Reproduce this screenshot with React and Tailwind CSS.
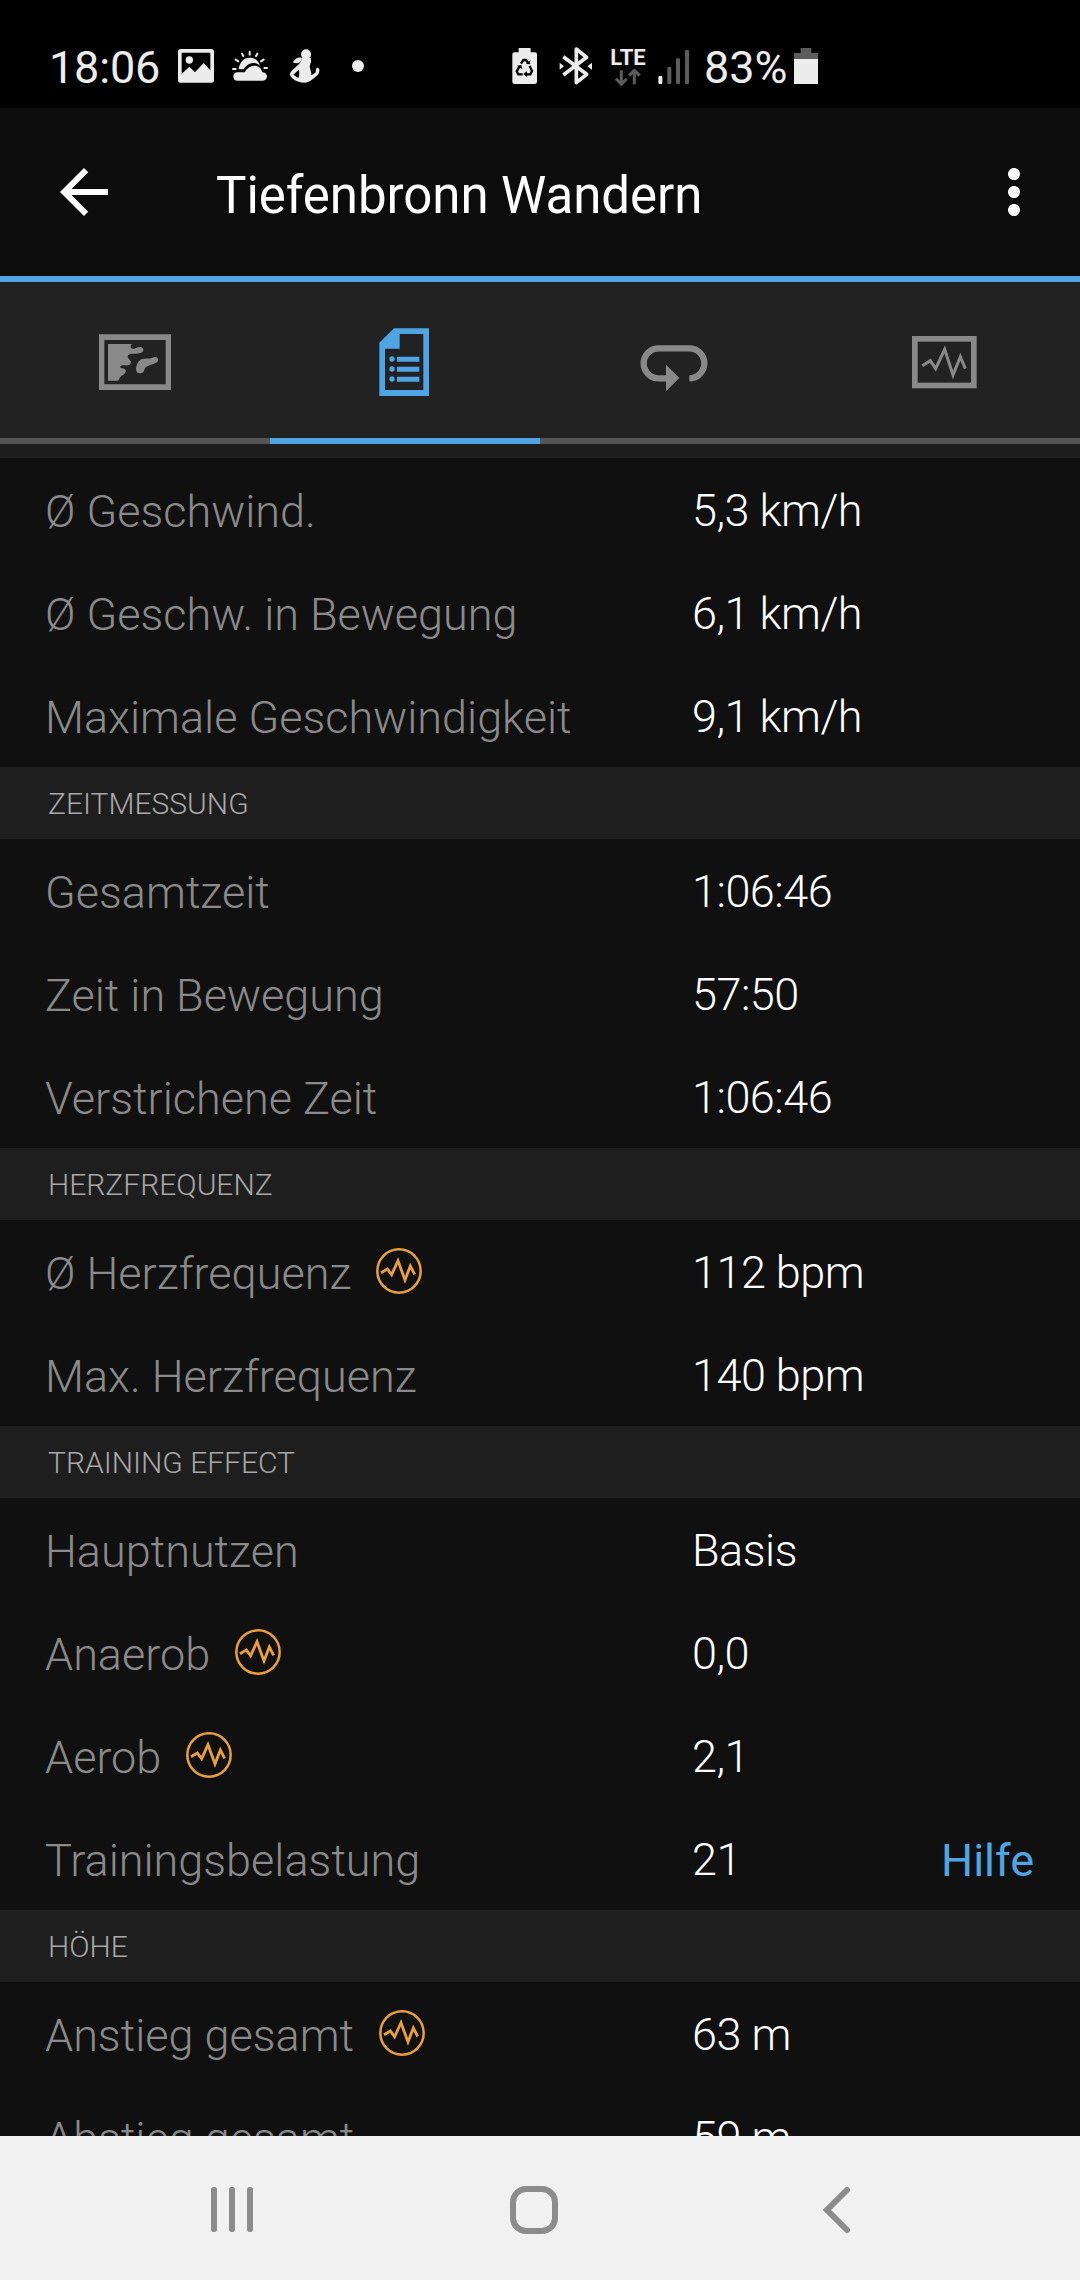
const PULSE_POINTS = '93,128 112,117 125,134 144,92 165,150 181,108 194,133';

const sections = [
  {
    title: null,
    rows: [
      { label: 'Ø Geschwind.', value: '5,3 km/h' },
      { label: 'Ø Geschw. in Bewegung', value: '6,1 km/h' },
      { label: 'Maximale Geschwindigkeit', value: '9,1 km/h' },
    ],
  },
  {
    title: 'ZEITMESSUNG',
    rows: [
      { label: 'Gesamtzeit', value: '1:06:46' },
      { label: 'Zeit in Bewegung', value: '57:50' },
      { label: 'Verstrichene Zeit', value: '1:06:46' },
    ],
  },
  {
    title: 'HERZFREQUENZ',
    rows: [
      { label: 'Ø Herzfrequenz', value: '112 bpm', pulse: true },
      { label: 'Max. Herzfrequenz', value: '140 bpm' },
    ],
  },
  {
    title: 'TRAINING EFFECT',
    rows: [
      { label: 'Hauptnutzen', value: 'Basis' },
      { label: 'Anaerob', value: '0,0', pulse: true },
      { label: 'Aerob', value: '2,1', pulse: true },
      { label: 'Trainingsbelastung', value: '21', link: 'Hilfe' },
    ],
  },
  {
    title: 'HÖHE',
    rows: [
      { label: 'Anstieg gesamt', value: '63 m', pulse: true },
      { label: 'Abstieg gesamt', value: '59 m' },
    ],
  },
];

/* Status bar icons */

const PictureIcon = () => (
  <svg className="w-9 h-10 shrink-0" viewBox="444 48 108 120" fill="#ececec">
    <path
      fillRule="evenodd"
      d="M452 57h92q8 0 8 8v85q0 8-8 8h-92q-8 0-8-8V65q0-8 8-8zM455 68v64l23-22 17 17 26-28 20 22V68z"
    />
    <circle cx="478" cy="90" r="11" />
  </svg>
);

const WeatherIcon = () => (
  <svg className="w-9 h-10 shrink-0" viewBox="606 48 108 120" fill="#ececec">
    <path d="M622 127h22c7-13 17-20 29-20 13 0 21 8 24 20 8 0 14 5 14 12s-5 13-12 13h-77c-7 0-12-5-12-12 0-8 5-13 12-13z" />
    <path d="M626 118c2-21 15-35 33-35 15 0 27 8 31 24-9-8-20-10-31-6-8 3-13 9-18 17z" />
    <path
      d="M659 65v9M636 71l4 7M682 71l-4 7M617 89l8 5M701 89l-8 5M609 117h8M703 114h8"
      stroke="#ececec"
      strokeWidth="6"
      strokeLinecap="round"
    />
  </svg>
);

const WorkoutIcon = () => (
  <svg className="w-[30px] h-10 shrink-0" viewBox="779 48 90 120" fill="#ececec">
    <circle cx="827" cy="73" r="15" />
    <path d="M787 97c7-11 16-17 27-14l-2 10c-6 7-13 9-25 4z" />
    <path d="M813 84h28c4 10-2 17-3 27 2 8 6 18 5 25l12-8c3-4 0-11 4-14 5-3 9 2 8 7 0 11-5 15-13 21-10 8-17 16-30 16-15 0-28-4-39-14-7-7-8-14-1-21l22-21c5-5 8-10 7-18zM805 119l-16 15 15 10c3-8 4-17 1-25z" fillRule="evenodd" />
  </svg>
);

const BatterySaverIcon = () => (
  <svg className="w-[25px] h-10 shrink-0" viewBox="67 48 75 120">
    <path d="M87 54h36v13h13q6 0 6 6v82q0 7-7 7H75q-7 0-7-7V73q0-6 6-6h13z" fill="#ececec" />
    <g fill="none" stroke="#000" strokeWidth="7">
      <path d="M94 101l7-11h8l7 10M120 108l7 15-5 10h-13M99 133H86l-5-9 8-14" />
    </g>
    <path d="M109 102l12 1 1-13zM112 124v17l-11-9zM82 107l13-2 3 12z" fill="#000" />
  </svg>
);

const BluetoothIcon = () => (
  <svg className="w-[33px] h-10 shrink-0" viewBox="206 48 99 120">
    <path
      d="M219 80l70 53-31 25V57l31 25-70 53"
      fill="none"
      stroke="#ececec"
      strokeWidth="11"
      strokeLinejoin="round"
    />
    <path d="M208 98l13 11-13 10zM305 98l-14 11 14 10z" fill="#ececec" />
  </svg>
);

const DataArrowsIcon = () => (
  <svg className="w-[26px] h-[17px]" viewBox="377 119 78 51" fill="none" stroke="#5c5c5c" strokeWidth="9">
    <path d="M396 123v39M380 148l16 17 16-17M435 165v-39M419 139l16-16 16 16" />
  </svg>
);

const SignalIcon = () => (
  <svg className="w-8 h-10 shrink-0" viewBox="505 48 96 120" fill="#5c5c5c">
    <rect x="506" y="138" width="12" height="24" rx="3" fill="#ececec" />
    <rect x="533" y="111" width="12" height="51" rx="3" />
    <rect x="559" y="85" width="12" height="77" rx="3" />
    <rect x="586" y="60" width="12" height="102" rx="3" />
  </svg>
);

const BatteryIcon = () => (
  <svg className="w-6 h-10 shrink-0" viewBox="912 48 72 120">
    <path d="M932 54h32v15h20v18h-72V69h20z" fill="#5c5c5c" />
    <path d="M912 87h72v75h-72z" fill="#ececec" />
  </svg>
);

/* Tab icons */

const MapIcon = () => (
  <svg className="size-[90px]" viewBox="90 45 270 270" fill="#898989">
    <path fillRule="evenodd" d="M117 103h216v167H117zM133 120v133h184V120z" />
    <path d="M144 132h72c-6 6-5 14 3 14 9 0 14-6 23-5 9 2 11 11 4 16-11 7-24 2-36 5-8 3-9 9-4 14 9 8 9 14 1 19-8 3-16-1-24 2-4 3-3 7 3 8 10 1 14 7 10 13-3 6-11 7-15 13-4 5-4 9-7 11h-30z" />
    <path d="M228 207c1-14 7-26 19-30 12-3 19 0 30-4 8-4 16-2 17 5 1 8-6 11-14 14-10 3-20 6-25 13-4 7-2 15-15 15-8 0-12-5-12-13z" />
  </svg>
);

const DetailsIcon = () => (
  <svg className="size-[90px]" viewBox="900 45 270 270" fill="#4fa5e4">
    <path fillRule="evenodd" d="M1002 85h105v203H958V128zM1019 102v44h-44v124h115V102z" />
    <circle cx="996" cy="177" r="8" />
    <circle cx="996" cy="207" r="8" />
    <circle cx="996" cy="237" r="8" />
    <path d="M1011 170h67v15h-67zM1011 200h67v15h-67zM1011 230h67v15h-67z" />
  </svg>
);

const LapsIcon = () => (
  <svg className="size-[90px]" viewBox="90 45 270 270">
    <path
      d="M268 235a45 45 0 0 0 0-90H176a45 45 0 0 0 0 90h26"
      fill="none"
      stroke="#898989"
      strokeWidth="19"
    />
    <path d="M198 194l40 40-40 40z" fill="#898989" />
  </svg>
);

const ChartsIcon = () => (
  <svg className="size-[90px]" viewBox="900 45 270 270" fill="none" stroke="#898989">
    <rect x="944.5" y="116.5" width="177" height="140" strokeWidth="17" />
    <path d="M967 197l24-15 16 24 27-58 25 77 22-55 15 36" strokeWidth="9" />
  </svg>
);

const PulseIcon = () => (
  <svg className="size-[46px] ml-[25px] -mt-1.5" viewBox="78 54 138 138" fill="none" stroke="#e8a03c">
    <circle cx="147" cy="123" r="65" strokeWidth="7.5" />
    <polyline points={PULSE_POINTS} strokeWidth="8.5" />
  </svg>
);

const tabs = [
  { id: 'map', icon: MapIcon },
  { id: 'details', icon: DetailsIcon },
  { id: 'laps', icon: LapsIcon },
  { id: 'charts', icon: ChartsIcon },
];

const StatusBar = () => (
  <div className="h-[108px] shrink-0 bg-black flex items-start pt-[46px] pl-[49px] text-[#ececec]">
    <span className="w-[129px] pt-0.5 text-[45px] leading-10 tracking-[-0.2px]">18:06</span>
    <PictureIcon />
    <div className="w-[18px]" />
    <WeatherIcon />
    <div className="w-[22px]" />
    <WorkoutIcon />
    <div className="size-3 rounded-full bg-[#ececec] mt-3.5 ml-8" />
    <div className="w-[148px]" />
    <BatterySaverIcon />
    <div className="w-[22px]" />
    <BluetoothIcon />
    <div className="w-[60px] ml-1.5 flex flex-col items-center">
      <span className="text-[22px] leading-[23px] font-bold">LTE</span>
      <DataArrowsIcon />
    </div>
    <SignalIcon />
    <span className="w-[104px] pl-[14px] pt-0.5 text-[45px] leading-10">83%</span>
    <BatteryIcon />
  </div>
);

const AppBar = () => (
  <header className="h-[174px] shrink-0 bg-[#0c0c0c] border-b-6 border-[#4fa5e4] flex items-center pl-12 pr-[30px] text-white">
    <svg className="size-[72px]" viewBox="0 0 24 24" fill="currentColor">
      <path d="M20 11H7.83l5.59-5.59L12 4l-8 8 8 8 1.41-1.41L7.83 13H20v-2z" />
    </svg>
    <h1 className="ml-24 pt-1.5 flex-1 text-[51px] leading-none tracking-[-0.05px]">Tiefenbronn Wandern</h1>
    <svg className="size-[72px]" viewBox="0 0 24 24" fill="currentColor">
      <path d="M12 8c1.1 0 2-.9 2-2s-.9-2-2-2-2 .9-2 2 .9 2 2 2zm0 2c-1.1 0-2 .9-2 2s.9 2 2 2 2-.9 2-2-.9-2-2-2zm0 6c-1.1 0-2 .9-2 2s.9 2 2 2 2-.9 2-2-.9-2-2-2z" />
    </svg>
  </header>
);

const TabBar = ({ active }) => (
  <nav className="h-[162px] shrink-0 grid grid-cols-4 bg-[#222222]">
    {tabs.map(({ id, icon: Icon }) => (
      <button
        key={id}
        className={`flex items-center justify-center border-b-6 ${
          id === active ? 'border-[#4fa5e4]' : 'border-[#555555]'
        }`}
      >
        <Icon />
      </button>
    ))}
  </nav>
);

const StatRow = ({ label, value, pulse, link }) => (
  <div className="h-[103px] flex items-center pt-0.5 pr-[46px] text-[45px] leading-[53px]">
    <div className="w-[692px] pl-[45px] pt-0.5 flex items-center font-light text-[#8a8a8a]">
      <span>{label}</span>
      {pulse && <PulseIcon />}
    </div>
    <span className="flex-1 font-light tracking-[-0.5px] text-white">{value}</span>
    {link && <a className="pt-0.5 text-[#4fa5e4]">{link}</a>}
  </div>
);

const NavBar = () => (
  <div className="h-36 shrink-0 bg-[#f1f1f1] flex items-center pl-[202px] text-[#8c8c8c]">
    <svg className="size-[60px]" viewBox="0 0 60 60" fill="currentColor">
      <rect x="9" y="9" width="6" height="45" rx="2.5" />
      <rect x="27" y="9" width="6" height="45" rx="2.5" />
      <rect x="45" y="9" width="6" height="45" rx="2.5" />
    </svg>
    <svg className="size-[60px] ml-[242px]" viewBox="0 0 60 60" fill="none" stroke="currentColor" strokeWidth="6">
      <rect x="9" y="11" width="42" height="42" rx="13" />
    </svg>
    <svg className="size-[60px] ml-[242px]" viewBox="0 0 60 60" fill="none" stroke="currentColor" strokeWidth="6" strokeLinecap="round">
      <path d="M41 12L21 32l20 20" />
    </svg>
  </div>
);

const App = () => (
  <div className="w-[1080px] h-[2280px] flex flex-col overflow-hidden bg-[#101010] font-['Roboto',sans-serif]">
    <StatusBar />
    <AppBar />
    <TabBar active="details" />

    <main className="flex-1 min-h-0 overflow-hidden border-t-14 border-[#1d1d1d]">
      {sections.map((section, i) => (
        <section key={i}>
          {section.title && (
            <h2 className="h-[72px] pl-12 flex items-center bg-[#1e1e1e] text-[30px] font-light text-[#a8a8a8]">
              {section.title}
            </h2>
          )}
          {section.rows.map((row) => (
            <StatRow key={row.label} {...row} />
          ))}
        </section>
      ))}
    </main>

    <NavBar />
  </div>
);

export default App;
